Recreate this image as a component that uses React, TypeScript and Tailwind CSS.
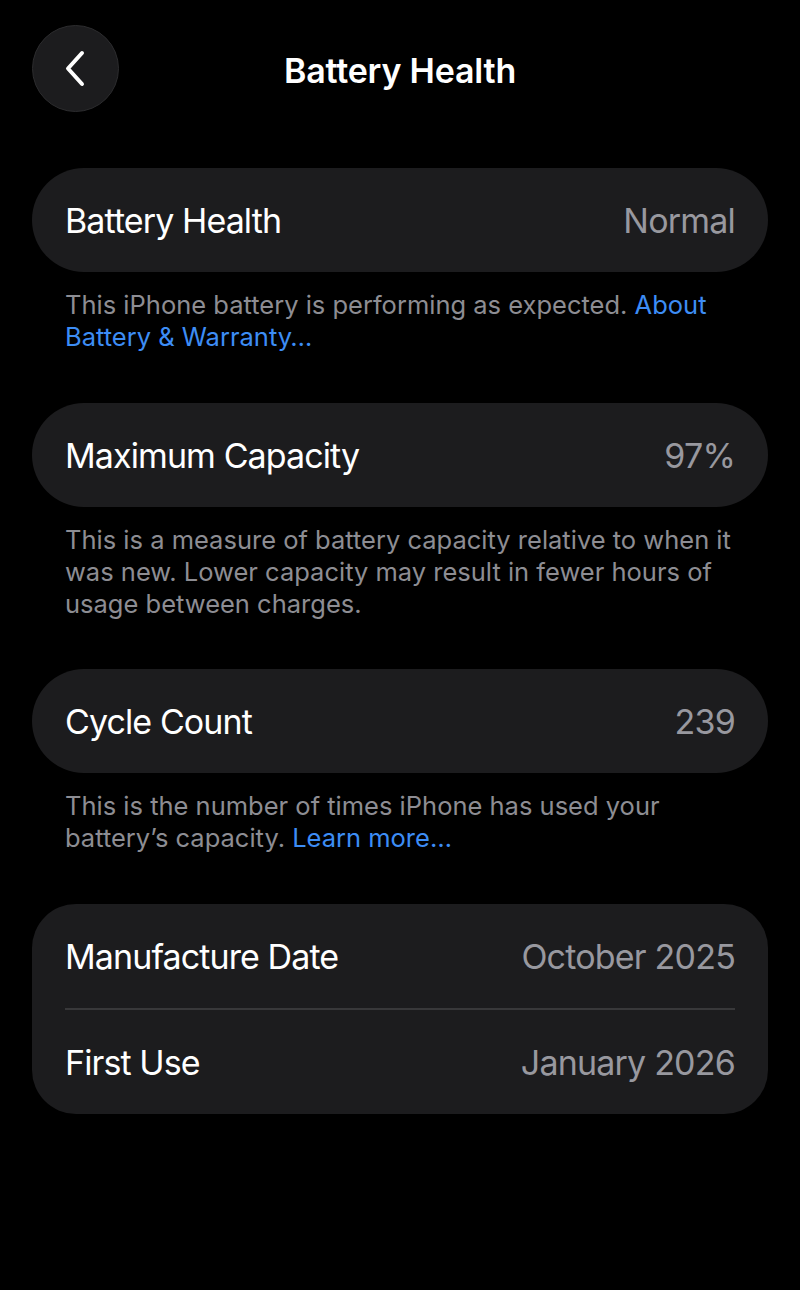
import React from 'react'

const font = { fontFamily: 'Inter, "Noto Sans", sans-serif' }

function Row({ label, value }: { label: string; value: string }) {
  return (
    <div className="flex items-center justify-between h-[104px] px-[33px]">
      <span className="text-[34px] text-white tracking-[-0.9px]">{label}</span>
      <span className="text-[34px] text-[#98989f] tracking-[-0.8px]">{value}</span>
    </div>
  )
}

function Footer({ children }: { children: React.ReactNode }) {
  return (
    <p className="pl-[33px] pr-[10px] pt-[17px] text-[25.5px] leading-[32px] text-[#8d8d93] whitespace-nowrap">
      {children}
    </p>
  )
}

export default function App() {
  return (
    <div className="min-h-[1290px] w-[800px] bg-black" style={font}>
      {/* Nav bar */}
      <div className="relative flex items-center justify-center h-[137px]">
        <button className="absolute left-[32px] top-[25px] flex items-center justify-center w-[87px] h-[87px] rounded-full bg-[#1c1c1e] border border-[#2c2c2e]">
          <svg width="28" height="40" viewBox="0 0 28 40" fill="none">
            <path d="M20 4 L6 19.5 L20 35" stroke="white" strokeWidth="4" strokeLinecap="round" strokeLinejoin="round" />
          </svg>
        </button>
        <h1 className="text-[34px] font-semibold text-white tracking-[-0.2px] mt-[3px]">Battery Health</h1>
      </div>

      <div className="px-[32px] pt-[31px]">
        <div className="rounded-full bg-[#1c1c1e]">
          <Row label="Battery Health" value="Normal" />
        </div>
        <Footer>
          This iPhone battery is performing as expected. <span className="text-[#3d8df5]">About</span>
          <br />
          <span className="text-[#3d8df5]">Battery &amp; Warranty…</span>
        </Footer>

        <div className="mt-[50px] rounded-full bg-[#1c1c1e]">
          <Row label="Maximum Capacity" value="97%" />
        </div>
        <Footer>
          This is a measure of battery capacity relative to when it
          <br />
          was new. Lower capacity may result in fewer hours of
          <br />
          usage between charges.
        </Footer>

        <div className="mt-[49px] rounded-full bg-[#1c1c1e]">
          <Row label="Cycle Count" value="239" />
        </div>
        <Footer>
          This is the number of times iPhone has used your
          <br />
          battery’s capacity. <span className="text-[#3d8df5]">Learn more…</span>
        </Footer>

        <div className="mt-[50px] rounded-[44px] bg-[#1c1c1e]">
          <Row label="Manufacture Date" value="October 2025" />
          <div className="mx-[33px] h-[2px] bg-[#38383a]" />
          <Row label="First Use" value="January 2026" />
        </div>
      </div>
    </div>
  )
}
